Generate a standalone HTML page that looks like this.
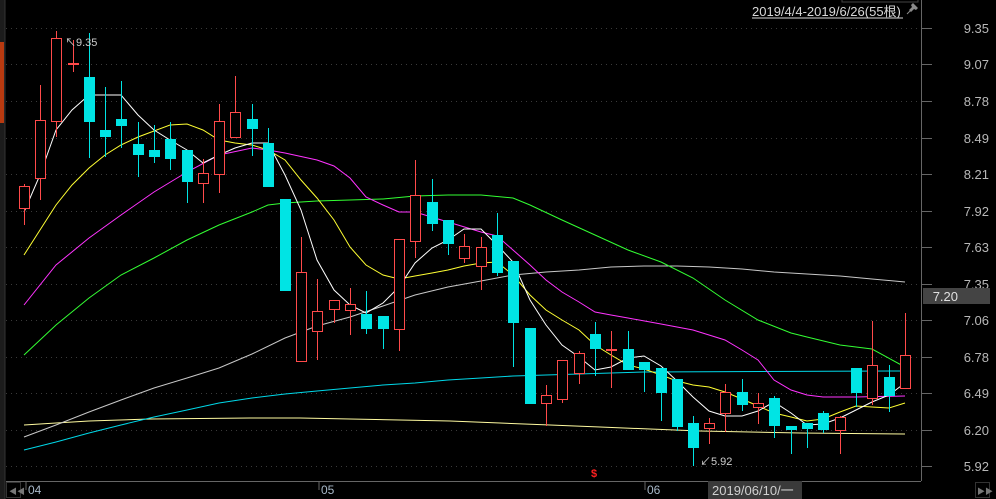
<!DOCTYPE html>
<html><head><meta charset="utf-8"><style>
html,body{margin:0;padding:0;background:#000;width:996px;height:499px;overflow:hidden}
svg{display:block}
text{font-family:"Liberation Sans","Noto Sans CJK SC",sans-serif}
</style></head><body>
<svg id="s" width="996" height="499" xmlns="http://www.w3.org/2000/svg">
<rect width="996" height="499" fill="#000"/>
<rect x="0" y="0" width="5" height="499" fill="#1c1c1c"/>
<rect x="0" y="42" width="4" height="81" fill="#b83a10"/>
<line x1="5" y1="0" x2="5" y2="499" stroke="#333"/>
<g id="grid" stroke="#3a3a3a" stroke-dasharray="1,4"></g>
<line x1="921.5" y1="0" x2="921.5" y2="481" stroke="#666"/>
<line x1="6" y1="481.5" x2="921" y2="481.5" stroke="#666"/>
<rect x="842" y="-1" width="76" height="3" fill="none" stroke="#444"/>
<g id="ticks" stroke="#666"></g>
<g id="labels" fill="#b8b8b8" font-size="13" text-anchor="end"></g>
<rect x="923" y="288" width="67" height="16" fill="#444"/>
<text x="958" y="301" fill="#e0e0e0" font-size="13" text-anchor="end">7.20</text>
<text x="752" y="16" fill="#d8d8d8" font-size="13">2019/4/4-2019/6/26(55根)</text>
<line x1="752" y1="18" x2="903" y2="18" stroke="#d8d8d8"/>
<g fill="#8a8a8a" stroke="#8a8a8a"><path d="M909 10 L912 7 L911 5 L913 3 L918 8 L916 10 L914 9 L911 12 Z" stroke="none"/><line x1="911" y1="10" x2="907" y2="14"/></g>
<g id="mas" fill="none" stroke-width="1"></g>
<g id="candles"></g>
<text x="65" y="46" fill="#ccc" font-size="11">↖9.35</text>
<text x="700" y="465" fill="#ccc" font-size="11">↙5.92</text>
<text x="591" y="477" fill="#ff2020" font-size="11" font-weight="bold">$</text>
<line x1="26" y1="481" x2="26" y2="490" stroke="#666"/>
<line x1="319" y1="481" x2="319" y2="490" stroke="#666"/>
<line x1="645" y1="481" x2="645" y2="490" stroke="#666"/>
<text x="28" y="494" fill="#a8b8c8" font-size="12">04</text>
<text x="321" y="494" fill="#a8b8c8" font-size="12">05</text>
<text x="647" y="494" fill="#a8b8c8" font-size="12">06</text>
<rect x="6.5" y="482.5" width="14" height="15" fill="none" stroke="#333"/>
<text x="9" y="494" fill="#777" font-size="8">◀◀</text>
<rect x="975.5" y="482.5" width="14" height="15" fill="none" stroke="#333"/>
<text x="977" y="494" fill="#777" font-size="8">▶▶</text>
<rect x="708" y="481" width="94" height="18" fill="#3a3a3a"/>
<text x="712" y="495" fill="#d0d0d0" font-size="13">2019/06/10/一</text>
</svg>
<script>
var NS="http://www.w3.org/2000/svg";
function el(p,t,a){var e=document.createElementNS(NS,t);for(var k in a)e.setAttribute(k,a[k]);document.getElementById(p).appendChild(e);return e;}
var lv=[["9.35",28],["9.07",64],["8.78",101],["8.49",138],["8.21",174],["7.92",211],["7.63",247],["7.35",284],["7.06",320],["6.78",357],["6.49",393],["6.20",430],["5.92",466]];
lv.forEach(function(l){el("grid","line",{x1:6,x2:918,y1:l[1]+.5,y2:l[1]+.5});el("ticks","line",{x1:921,x2:932,y1:l[1]+.5,y2:l[1]+.5});var t=el("labels","text",{x:989,y:l[1]+5});t.textContent=l[0];});
var ma=[
["#fffba0","24,425 56,423 89,421 150,419 250,418 300,418 350,419 400,420 450,421 500,423 550,425 600,427 650,429 700,431 750,432 800,433 905,434"],
["#00d8e8","24,450 56,442 89,433 121,425 154,417 187,410 219,403 252,398 285,394 317,391 350,388 383,385 415,383 448,380 481,378 513,376 546,375 579,374 611,373 644,372 905,371"],
["#c8c8c8","24,437 56,425 89,412 121,400 154,388 187,378 219,368 252,354 285,338 317,326 350,317 383,306 415,295 448,287 481,281 513,275 546,272 579,270 611,267 644,266 677,266 709,267 742,269 774,272 807,274 840,276 872,279 905,282"],
["#33ff33","24,355 56,325 89,298 121,275 154,258 187,240 219,225 252,212 268,205 285,203 317,201 350,200 383,199 415,196 448,195 481,195 513,198 530,205 562,220 595,235 628,250 661,262 693,278 725,300 758,320 791,333 807,337 840,345 872,349 905,367"],
["#ff33ff","24,305 56,265 89,238 121,215 154,192 187,172 219,155 252,148 268,150 285,153 317,160 334,166 350,178 366,197 383,205 399,212 415,212 448,222 481,232 497,236 513,250 530,265 546,280 562,292 579,302 595,312 611,315 628,318 661,324 693,330 725,340 742,350 758,360 774,380 791,390 807,395 823,397 856,397 905,396"],
["#ffff33","24,255 40,230 56,205 72,185 89,168 105,155 121,145 138,137 154,131 170,125 187,124 203,130 219,140 235,143 252,145 268,150 285,160 301,180 317,198 334,220 350,247 366,265 383,275 399,279 415,276 432,273 448,270 464,266 481,263 497,262 513,275 530,295 546,310 562,320 579,330 595,345 611,355 628,365 644,369 661,375 677,381 693,385 709,387 725,392 742,399 758,406 774,413 791,417 807,421 823,419 840,412 856,406 872,407 889,408 905,403"],
["#ffffff","24,212 40,175 56,130 72,110 89,95 105,95 121,95 138,115 154,130 170,140 187,150 203,163 219,155 235,148 252,143 268,143 285,175 301,210 317,260 334,290 350,305 366,313 383,303 399,287 415,263 432,248 448,240 464,229 481,229 497,245 513,262 530,300 546,325 562,345 579,357 595,370 611,367 628,358 644,356 661,366 677,381 693,397 709,411 725,416 742,416 758,411 774,402 791,413 807,425 823,424 840,418 856,410 872,402 889,395 905,383"]];
ma.forEach(function(m){el("mas","polyline",{points:m[1],stroke:m[0]});});
var c=[[24,1,186,208,184,225],[40,1,120,178,85,200],[56,1,38,121,31,137],[73,1,63,64,40,72],[89,0,77,122,33,158],[105,0,130,137,87,157],[121,0,119,126,81,148],[138,0,144,155,122,177],[154,0,150,157,125,163],[170,0,139,159,122,170],[187,0,150,182,150,203],[203,1,173,183,159,203],[219,1,121,174,104,193],[235,1,112,137,76,137],[252,0,119,129,104,156],[268,0,143,187,128,187],[285,0,199,291,199,291],[301,1,272,361,237,361],[317,1,311,331,279,360],[334,1,300,309,300,323],[350,1,304,310,288,335],[366,0,314,329,291,334],[383,0,316,329,316,349],[399,1,239,329,239,351],[415,1,195,241,160,258],[432,0,202,224,179,231],[448,0,220,244,220,255],[464,1,246,258,234,263],[481,1,247,266,237,290],[497,0,235,273,213,276],[513,0,261,323,261,367],[530,0,328,404,328,404],[546,1,395,403,385,426],[562,1,360,399,360,403],[579,1,353,373,351,384],[595,0,334,349,322,376],[611,1,349,351,331,388],[628,0,349,370,331,370],[644,0,362,370,362,392],[661,0,368,393,368,421],[677,0,379,427,379,431],[693,0,423,448,416,466],[709,1,423,428,418,444],[725,1,392,413,384,432],[742,0,392,405,379,411],[758,1,403,407,393,424],[774,0,398,426,396,438],[791,0,426,430,426,454],[807,0,423,429,423,448],[823,0,413,430,411,433],[840,1,417,430,416,454],[856,0,368,393,368,407],[872,1,365,398,321,405],[889,0,377,396,365,412],[905,1,355,388,313,388]];
c.forEach(function(d){var x=d[0],col=d[1]?"#ff4a4a":"#00e4e4";
el("candles","line",{x1:x+.5,x2:x+.5,y1:d[4],y2:d[5],stroke:col});
var h=Math.max(d[3]-d[2],1);
if(d[1]){ if(h<=2) el("candles","rect",{x:x-5,y:d[2],width:11,height:2,fill:col});
 else el("candles","rect",{x:x-4.5,y:d[2]+.5,width:10,height:h,fill:"#000",stroke:col});}
else el("candles","rect",{x:x-5,y:d[2],width:11,height:h,fill:col});});
</script>
</body></html>
